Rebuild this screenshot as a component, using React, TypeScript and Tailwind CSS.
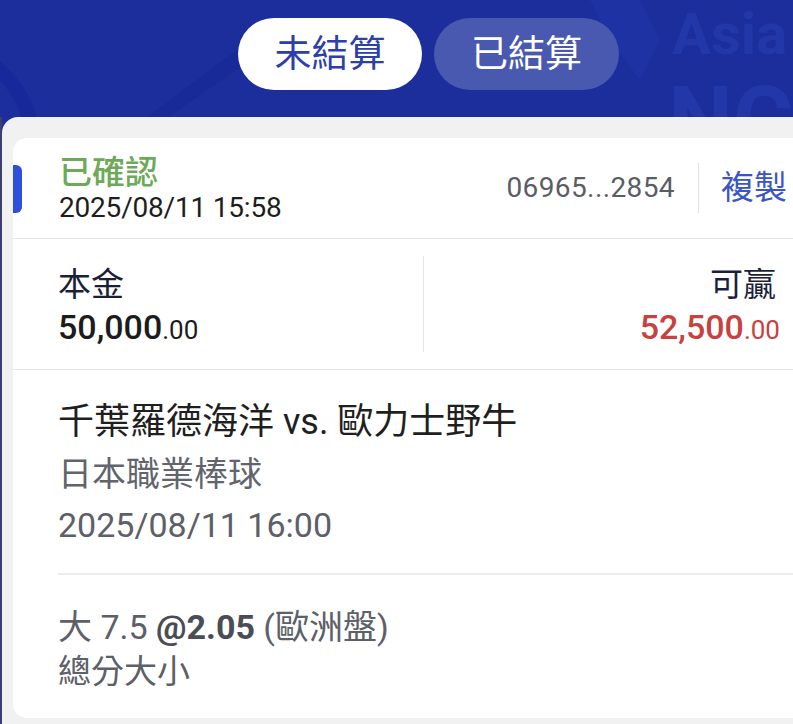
import React from "react";

const font = { fontFamily: 'Roboto, "Noto Sans CJK TC", "Noto Sans", sans-serif' };

export default function App() {
  return (
    <div className="w-[793px] h-[724px] overflow-hidden bg-[#1b2e9c] relative" style={font}>
      {/* background decorations */}
      <svg className="absolute left-0 top-0" width="793" height="130" viewBox="0 0 793 130">
        <path d="M-40 40 C 20 60, 40 110, 40 140 L 25 140 C 25 110, 5 70, -40 55 Z" fill="#16289a" />
        <path d="M130 130 L 250 40 L 262 52 L 150 130 Z" fill="#172a98" />
        <path d="M590 0 L 640 0 L 660 40 L 640 80 L 610 40 Z" fill="#1e32a4" />
        <text x="672" y="54" fontSize="58" fontWeight="700" fill="#2338a8" fontFamily="Roboto, sans-serif">Asia</text>
        <text x="668" y="152" fontSize="92" fontWeight="700" fill="#2338a8" fontFamily="Roboto, sans-serif">NC</text>
      </svg>

      <div className="relative flex flex-col">
        {/* tabs */}
        <div className="h-[117px] flex justify-center pt-[18px] gap-[12px] pl-[64px]">
          <div className="w-[184px] h-[72px] rounded-full bg-white flex items-center justify-center text-[37px] text-[#2d40a8] leading-none">
            未結算
          </div>
          <div className="w-[185px] h-[72px] rounded-full bg-[#4a59b0] flex items-center justify-center text-[37px] text-white leading-none">
            已結算
          </div>
        </div>

        {/* panel */}
        <div className="flex">
          <div className="w-[2px] bg-[#3b4070]" />
          <div className="flex-1 bg-[#f1f1f1] rounded-tl-[16px] pt-[21px] pl-[11px] h-[620px]">
            <div className="bg-white rounded-l-[14px] h-[580px] flex flex-col">
              {/* header row */}
              <div className="h-[101px] flex items-center border-b border-[#e6e6e6] relative">
                <div className="absolute left-0 top-[27px] w-[9px] h-[48px] bg-[#2f4fd8] rounded-r-[6px]" />
                <div className="pl-[46px] flex flex-col flex-1 pt-[4px]">
                  <div className="text-[33px] leading-[36px] text-[#6ea95a] font-medium">已確認</div>
                  <div className="text-[28px] leading-[34px] text-[#1e1e1e] tracking-[-0.2px]">2025/08/11 15:58</div>
                </div>
                <div className="flex items-center pr-[6px]">
                  <div className="text-[28px] text-[#5a5d66] tracking-[0.4px] pr-[23px]">06965...2854</div>
                  <div className="w-[1px] h-[50px] bg-[#e2e2e2]" />
                  <div className="text-[33px] text-[#3a55c4] pl-[22px]">複製</div>
                </div>
              </div>

              {/* amounts */}
              <div className="h-[131px] flex items-center border-b border-[#e6e6e6]">
                <div className="w-[410px] h-full pl-[45px] pt-[26px] flex flex-col">
                  <div className="text-[33px] leading-[40px] text-[#1c1f3a]">本金</div>
                  <div className="leading-[44px] text-[#1c1c1c] font-medium">
                    <span className="text-[34px]">50,000</span>
                    <span className="text-[26px] font-normal">.00</span>
                  </div>
                </div>
                <div className="w-[1px] h-[96px] bg-[#e6e6e6]" />
                <div className="flex-1 h-full pt-[26px] flex flex-col items-end pr-[13px]">
                  <div className="text-[33px] leading-[40px] text-[#1c1f3a] pr-[4px]">可贏</div>
                  <div className="leading-[44px] text-[#c6423f] font-medium">
                    <span className="text-[34px]">52,500</span>
                    <span className="text-[26px] font-normal">.00</span>
                  </div>
                </div>
              </div>

              {/* match */}
              <div className="pl-[45px] flex flex-col">
                <div className="pt-[30px] pb-[23px] flex flex-col">
                  <div className="text-[36px] leading-[44px] text-[#1f1f1f]">千葉羅德海洋 vs. 歐力士野牛</div>
                  <div className="text-[34px] leading-[52px] text-[#62646b] mt-[4px]">日本職業棒球</div>
                  <div className="text-[34px] leading-[50px] text-[#5d6068]">2025/08/11 16:00</div>
                </div>
                <div className="h-[2px] bg-[#ececec]" />
                <div className="pt-[30px] flex flex-col">
                  <div className="text-[34px] leading-[44px] text-[#5d6068]">
                    大 7.5 <span className="font-bold text-[#4a4d55]">@2.05</span> (歐洲盤)
                  </div>
                  <div className="text-[33px] leading-[46px] text-[#5d6068]">總分大小</div>
                </div>
              </div>
            </div>
          </div>
        </div>
      </div>
    </div>
  );
}
